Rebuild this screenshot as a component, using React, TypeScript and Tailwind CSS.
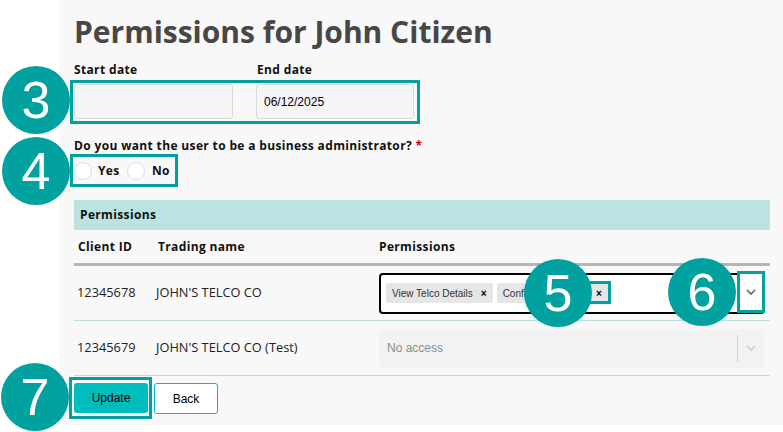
import React from "react";

const Num = ({ n, cls }: { n: string; cls: string }) => (
  <div
    className={`absolute w-[68px] h-[68px] rounded-full bg-[#00a19f] flex items-center justify-center text-white text-[52px] leading-none font-['Liberation_Sans',Arial,sans-serif] ${cls}`}
  >
    {n}
  </div>
);

const Chevron = ({ color }: { color: string }) => (
  <svg width="12" height="8" viewBox="0 0 12 8" fill="none">
    <path d="M2 2 L6 6 L10 2" stroke={color} strokeWidth="1.6" />
  </svg>
);

export default function App() {
  const head = "font-['Open_Sans',sans-serif]";
  const lbl = `${head} text-[12px] font-bold text-[#111] tracking-[0.35px]`;
  return (
    <div className="relative w-[783px] h-[432px] overflow-hidden bg-white">
      <div className="relative ml-[59px] h-[425px] bg-[#f8f8f8] overflow-hidden pl-[15px] pr-[13px]">
        <div className="absolute left-[616px] top-[-385px] w-[410px] h-[410px] rounded-full bg-[#efefef]" />
        <div className="relative">
          <h1 className={`${head} pt-[12px] h-[58px] text-[30px] leading-[40px] font-bold text-[#474747]`}>
            Permissions for John Citizen
          </h1>
          <div className={`${lbl} flex h-[22px] items-start leading-[14px] pt-[5px]`}>
            <span className="w-[183px]">Start date</span>
            <span>End date</span>
          </div>
          <div className="-ml-[4px] w-[350px] h-[44px] border-[3px] border-[#00a19f] pl-px pt-px flex gap-[23px]">
            <div className="w-[159px] h-[35px] rounded-[3px] border border-[#d9d9d9] bg-[#f5f4f7]" />
            <div className="w-[158px] h-[35px] rounded-[3px] border border-[#d9d9d9] bg-[#f5f4f7] flex items-center pl-[7px] text-[12px] text-black font-['Liberation_Sans',Arial,sans-serif]">
              06/12/2025
            </div>
          </div>
          <div className={`${lbl} mt-[13px] h-[17px] leading-[17px]`}>
            Do you want the user to be a business administrator? <span className="text-[#d40000]">*</span>
          </div>
          <div className={`${lbl} -ml-[4px] w-[108px] h-[33px] border-[3px] border-[#00a19f] flex items-center pl-px`}>
            <span className="w-[18px] h-[18px] rounded-full bg-white border border-[#dcdcdc]" />
            <span className="ml-[6px] w-[29px]">Yes</span>
            <span className="w-[18px] h-[18px] rounded-full bg-white border border-[#dcdcdc]" />
            <span className="ml-[7px]">No</span>
          </div>
          <div className="mt-[13px] h-[30px] bg-[#bbe3e1] flex items-center pl-[6px]">
            <span className={`${lbl} text-[#4a4a4a]`}>Permissions</span>
          </div>
          <div className={`${lbl} text-[12.5px] flex h-[36px] items-center border-b-[3px] border-[#b5b5b5]`}>
            <span className="w-[84px] pl-[4px]">Client ID</span>
            <span className="w-[221px]">Trading name</span>
            <span>Permissions</span>
          </div>
          <div className="flex h-[55px] items-center border-b border-[#b8e0de] text-[12.8px] text-[#222] font-['Open_Sans',sans-serif]">
            <span className="w-[82px] pl-[3px]">12345678</span>
            <span className="w-[223px]">JOHN'S TELCO CO</span>
            <div className="w-[386px] h-[41px] rounded-[4px] border-2 border-black bg-white flex items-center pl-[5px] gap-[4px] font-['Liberation_Sans',Arial,sans-serif] text-[10px] text-[#333]">
              <span className="h-[20px] px-[6px] bg-[#e6e6e6] rounded-[2px] flex items-center gap-[8px]">
                View Telco Details <span className="font-bold text-black text-[10px]">×</span>
              </span>
              <span className="h-[20px] pl-[6px] pr-[6px] bg-[#e6e6e6] rounded-[2px] flex items-center gap-[24px]">
                Configure Telco <span className="font-bold text-black text-[10px]">×</span>
              </span>
            </div>
          </div>
          <div className="flex h-[55px] items-center border-b border-[#b8e0de] text-[12.8px] text-[#222] font-['Open_Sans',sans-serif]">
            <span className="w-[82px] pl-[3px]">12345679</span>
            <span className="w-[223px]">JOHN'S TELCO CO (Test)</span>
            <div className="w-[385px] h-[39px] rounded-[4px] bg-[#f2f2f2] flex items-center pl-[8px] font-['Liberation_Sans',Arial,sans-serif] text-[12px] text-[#8c8c8c]">
              <span className="flex-1">No access</span>
              <span className="w-px h-[27px] bg-[#cfcfcf]" />
              <span className="w-[26px] flex justify-center">
                <Chevron color="#cfcfcf" />
              </span>
            </div>
          </div>
          <div className="flex items-start gap-[2px] mt-px">
            <div className="-ml-[5px] w-[83px] h-[42px] border-[3px] border-[#00a19f] pl-[2px] pt-[3px]">
              <button className="w-[74px] h-[30px] rounded-[3px] bg-[#00bdbd] text-[12px] text-black font-['Liberation_Sans',Arial,sans-serif]">
                Update
              </button>
            </div>
            <button className="mt-[6px] w-[64px] h-[31px] rounded-[3px] bg-white border border-[#00bdbd] text-[12px] text-black font-['Liberation_Sans',Arial,sans-serif]">
              Back
            </button>
          </div>
        </div>
      </div>
      <Num n="3" cls="left-[2px] top-[66px]" />
      <Num n="4" cls="left-[2px] top-[137px]" />
      <Num n="7" cls="left-[1px] top-[363px]" />
      <div className="absolute left-[581px] top-[281px] w-[30px] h-[23px] border-[3px] border-[#00a19f]" />
      <Num n="5" cls="left-[524px] top-[259px]" />
      <div className="absolute left-[737px] top-[271px] w-[28px] h-[42px] border-[3px] border-[#00a19f] bg-white flex items-center justify-center">
        <Chevron color="#666" />
      </div>
      <Num n="6" cls="left-[668px] top-[258px]" />
    </div>
  );
}
